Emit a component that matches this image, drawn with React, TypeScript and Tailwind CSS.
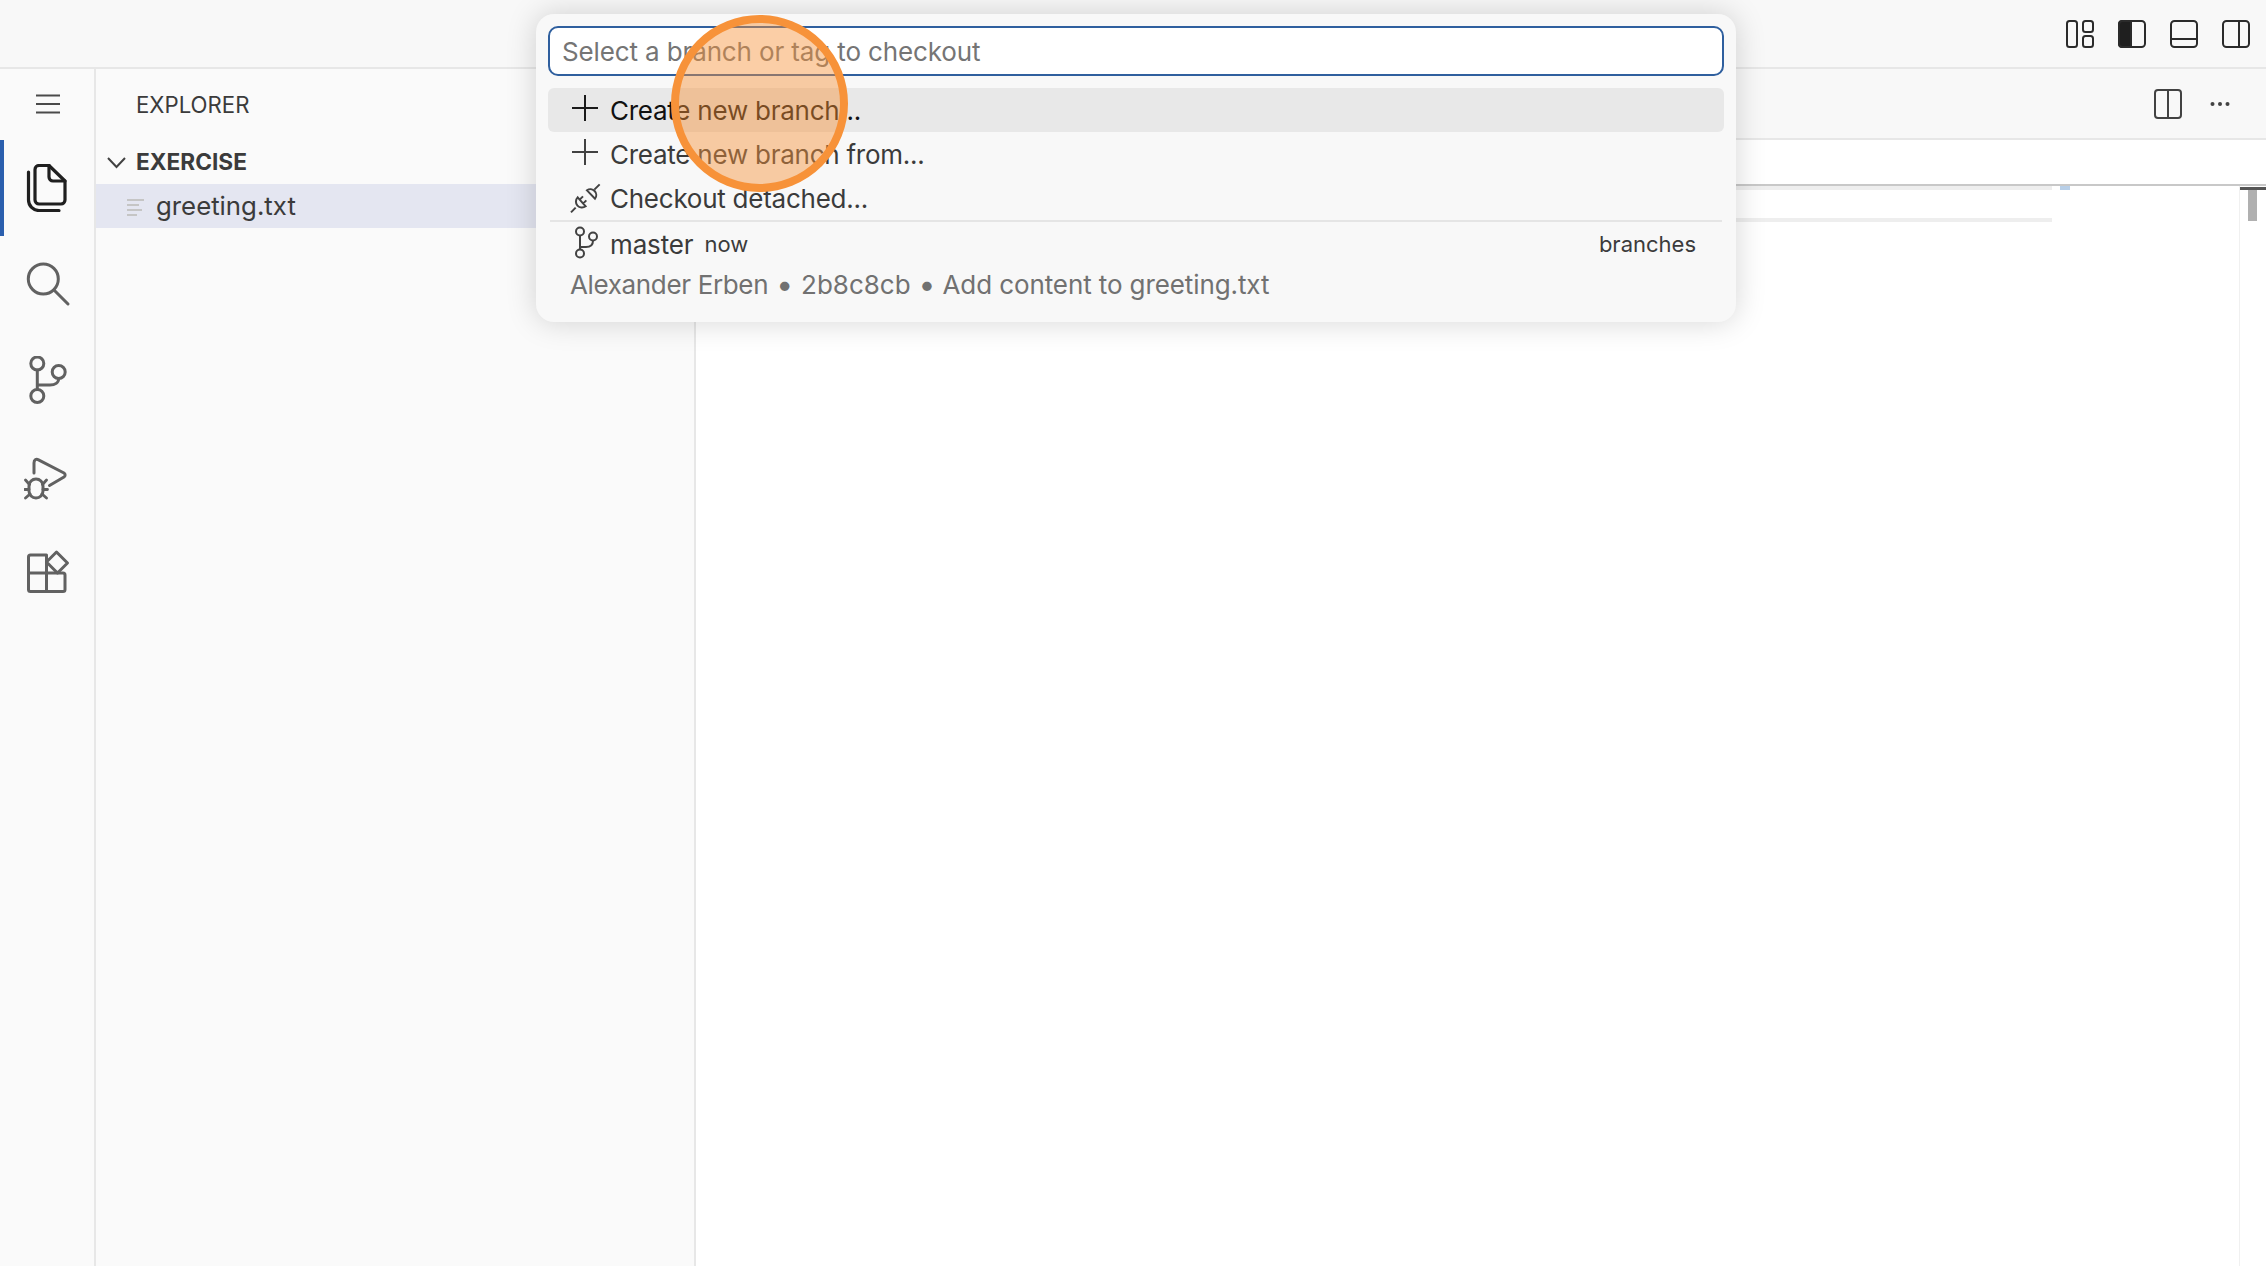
import { ReactNode } from 'react'

function ActivityItem({ y, children }: { y: number; children: ReactNode }) {
  // icons are traced in page coordinates, so the viewBox is the cell's 48px window
  return (
    <div className="h-[96px] flex items-center pl-[24px]">
      <svg width="48" height="48" viewBox={`24 ${y} 48 48`} fill="none" stroke="#616161" strokeWidth="3" strokeLinecap="round" strokeLinejoin="round">
        {children}
      </svg>
    </div>
  )
}

function ActivityBar() {
  return (
    <div className="w-[96px] shrink-0 bg-[#fafafa] border-r-2 border-[#e7e7e7] flex flex-col relative">
      <div className="h-[71px] flex items-center pl-[36px] pb-[1px]">
        <svg width="24" height="20" viewBox="0 0 24 20" stroke="#4a4a4a" strokeWidth="2">
          <path d="M0 1.500H24M0 10H24M0 18.500H24" />
        </svg>
      </div>
      <div className="absolute top-[71px] left-0 w-[4px] h-[96px] bg-[#2b5fae]" />
      <ActivityItem y={164}>
        <g stroke="#1f1f1f" strokeWidth="3.200">
          <path d="M49 165.500H39a4 4 0 0 0-4 4V200a4 4 0 0 0 4 4H61a4 4 0 0 0 4-4V181L49 165.500Z" />
          <path d="M49 165.500V177a4 4 0 0 0 4 4H65" />
          <path d="M28.500 172V200a10.500 10.500 0 0 0 10.500 10.500H59" />
        </g>
      </ActivityItem>
      <ActivityItem y={260}>
        <circle cx="43.300" cy="279" r="15" />
        <path d="M54.500 290.500L68 304" />
      </ActivityItem>
      <ActivityItem y={356}>
        <circle cx="37.300" cy="363.500" r="6.500" />
        <circle cx="37.300" cy="396" r="6.500" />
        <circle cx="58.700" cy="372" r="6.500" />
        <path d="M37.300 370V389.500M37.300 385H50c5 0 8.700-2.500 8.700-6.500" />
      </ActivityItem>
      <ActivityItem y={452}>
        <path d="M34 473V463c0-3 2-4.500 4.500-3.200L64 473c1.500 1 1.500 3 0 4L49.500 485.500" />
        <path d="M29 486a7 7 0 0 1 14 0V491a7 7 0 0 1-14 0Z" />
        <path d="M25.500 480L29.500 484.500M46.500 480L42.500 484.500M24.500 489.500H29M47.500 489.500H43M25.500 498L30 494M46.500 498L42 494" strokeWidth="2.800" />
      </ActivityItem>
      <ActivityItem y={548}>
        <path d="M46.500 555H30.500a2 2 0 0 0-2 2V589.500a2 2 0 0 0 2 2H63a2 2 0 0 0 2-2V575a2 2 0 0 0-2-2H46.500ZM46.500 555V591.500M28.500 573H46.500" />
        <path d="M56.500 552L67.500 563L57.500 573L46.500 562Z" />
      </ActivityItem>
    </div>
  )
}

function Sidebar() {
  return (
    <div className="w-[600px] shrink-0 bg-[#fafafa] border-r-2 border-[#e7e7e7] flex flex-col">
      <div className="h-[71px] flex items-center pl-[40px] pt-[1px] text-[22.200px] text-[#3b3b3b]">EXPLORER</div>
      <div className="h-[44px] flex items-center pt-[1px] text-[22.700px] font-bold text-[#3b3b3b]">
        <svg className="ml-[11px] mr-[10px]" width="19" height="12" viewBox="0 0 19 12" fill="none" stroke="#424242" strokeWidth="2">
          <path d="M1 1L9.500 10L18 1" />
        </svg>
        EXERCISE
      </div>
      <div className="h-[44px] bg-[#e4e6f1] flex items-center pt-[1px] text-[25.800px] text-[#3b3b3b]">
        <svg className="ml-[31px] mr-[12px]" width="17" height="18" viewBox="0 0 17 18" stroke="#c5c5c5" strokeWidth="2">
          <path d="M0 2H17M0 7H12M0 12H15M0 17H10" />
        </svg>
        greeting.txt
      </div>
    </div>
  )
}

function Editor() {
  return (
    <div className="flex-1 min-w-0 flex flex-col bg-white">
      <div className="h-[71px] shrink-0 bg-[#f8f8f8] border-b-2 border-[#e7e7e7] flex items-center justify-end gap-[28px] pr-[36px] pt-[1px]">
        <svg width="28" height="30" viewBox="0 0 28 30" fill="none" stroke="#424242" strokeWidth="2">
          <rect x="1" y="1" width="26" height="28" rx="3" />
          <path d="M14 1V29" />
        </svg>
        <svg width="20" height="6" viewBox="0 0 20 6" fill="#424242">
          <circle cx="2.500" cy="3" r="2" />
          <circle cx="10" cy="3" r="2" />
          <circle cx="17.500" cy="3" r="2" />
        </svg>
      </div>
      <div className="h-[46px] shrink-0 bg-white border-b-2 border-[#c8c8c8]" />
      <div className="flex-1 flex min-h-0">
        <div className="flex-1 min-w-0">
          <div className="h-[36px] border-y-4 border-[#eeeeee]" />
        </div>
        <div className="w-[187px] shrink-0">
          <div className="ml-[8px] w-[10px] h-[4px] bg-[#b8cfe8]" />
        </div>
        <div className="w-[27px] shrink-0 border-l border-[#f0f0f0]">
          <div className="mt-[1px] h-[3px] bg-[#555555]" />
          <div className="ml-[8px] w-[9px] h-[31px] bg-[#b0b0b0]" />
        </div>
      </div>
    </div>
  )
}

function PickRow({ active, icon, children }: { active?: boolean; icon: ReactNode; children: ReactNode }) {
  return (
    <div className={active ? 'h-[44px] flex items-center rounded-md bg-[#e8e8e8] text-[#111111]' : 'h-[44px] flex items-center text-[#3b3b3b]'}>
      <div className="w-[62px] shrink-0 flex">{icon}</div>
      {children}
    </div>
  )
}

function Plus({ color }: { color: string }) {
  return (
    <svg className="ml-[24px] mb-[5px]" width="26" height="26" viewBox="0 0 26 26" stroke={color} strokeWidth="2">
      <path d="M0 13H26M13 0V26" />
    </svg>
  )
}

function BranchPicker() {
  return (
    <div className="absolute left-[536px] top-[14px] w-[1200px] h-[308px] rounded-[18px] bg-[#f8f8f8] shadow-[0_0_30px_rgba(0,0,0,0.17)] px-[12px] pt-[12px] text-[26px]">
      <div className="h-[50px] rounded-[10px] border-2 border-[#2f5f9e] bg-white flex items-center pl-[12px] text-[#757575] tracking-[-0.13px]">
        Select a branch or tag to checkout
      </div>
      <div className="mt-[12px] tracking-[-0.25px]">
        <PickRow active icon={<Plus color="#1a1a1a" />}>Create new branch...</PickRow>
        <PickRow icon={<Plus color="#424242" />}>Create new branch from...</PickRow>
        <PickRow
          icon={
            <svg className="ml-[21px]" width="32" height="32" viewBox="30 272 96 96" fill="none" stroke="#424242" strokeWidth="6">
              <path d="M36 363L50 349M122 279L106 295" />
              <path d="M56 318L80 345A18.100 18.100 0 0 1 56 318ZM84 297L108 322A17.500 17.500 0 0 0 84 297ZM62 325L72 315M72 337L82 327" />
            </svg>
          }
        >
          Checkout detached...
        </PickRow>
      </div>
      <div className="h-[2px] mx-[2px] bg-[#e5e5e5]" />
      <div className="h-[45px] flex items-center text-[#3b3b3b]">
        <div className="w-[62px] shrink-0 flex">
          <svg className="ml-[22px] mb-[6px]" width="28" height="36" viewBox="570 224 28 36" fill="none" stroke="#424242" strokeWidth="2">
            <circle cx="580" cy="231.500" r="4" />
            <circle cx="580" cy="253.500" r="4" />
            <circle cx="593" cy="236.500" r="4" />
            <path d="M580 235.500V249.500M580 247H586C590 247 593 245 593 240.500" />
          </svg>
        </div>
        <span className="tracking-[-0.15px]">master</span>
        <span className="ml-[11px] text-[22px]">now</span>
        <span className="ml-auto mr-[28px] mb-[1px] text-[22px]">branches</span>
      </div>
      <div className="h-[34px] flex items-center pl-[22px] text-[#717171]">
        <span className="tracking-[-0.35px]">Alexander Erben</span>
        <span className="mx-[8px] text-[30px]">•</span>
        <span>2b8c8cb</span>
        <span className="ml-[8px] mr-[7px] text-[30px]">•</span>
        <span className="tracking-[-0.1px]">Add content to greeting.txt</span>
      </div>
    </div>
  )
}

export default function App() {
  return (
    <div className="relative h-screen w-full overflow-hidden bg-[#f8f8f8] flex flex-col [font-family:Inter,sans-serif]">
      <div className="h-[69px] shrink-0 border-b-2 border-[#e7e7e7] flex items-center justify-end gap-[24px] pr-[16px] pt-[1px]">
        <svg width="28" height="28" viewBox="0 0 28 28" fill="none" stroke="#2b2b2b" strokeWidth="2">
          <rect x="1" y="1" width="10" height="26" rx="2.500" />
          <rect x="17" y="1" width="10" height="11" rx="2.500" />
          <rect x="17" y="16" width="10" height="11" rx="2.500" />
        </svg>
        <svg width="28" height="28" viewBox="0 0 28 28" fill="none" stroke="#2b2b2b" strokeWidth="2">
          <path d="M13 1H4a3 3 0 0 0-3 3V24a3 3 0 0 0 3 3H13Z" fill="#1f1f1f" />
          <rect x="1" y="1" width="26" height="26" rx="3.500" />
        </svg>
        <svg width="28" height="28" viewBox="0 0 28 28" fill="none" stroke="#2b2b2b" strokeWidth="2">
          <rect x="1" y="1" width="26" height="26" rx="3.500" />
          <path d="M1 19H27" />
        </svg>
        <svg width="28" height="28" viewBox="0 0 28 28" fill="none" stroke="#2b2b2b" strokeWidth="2">
          <rect x="1" y="1" width="26" height="26" rx="3.500" />
          <path d="M17 1V27" />
        </svg>
      </div>
      <div className="flex-1 flex min-h-0">
        <ActivityBar />
        <Sidebar />
        <Editor />
      </div>
      <BranchPicker />
      {/* click highlight from the recording */}
      <div className="absolute left-[671px] top-[15px] w-[177px] h-[177px] rounded-full border-[8px] border-[#f79239] bg-[#f79239]/45" />
    </div>
  )
}
